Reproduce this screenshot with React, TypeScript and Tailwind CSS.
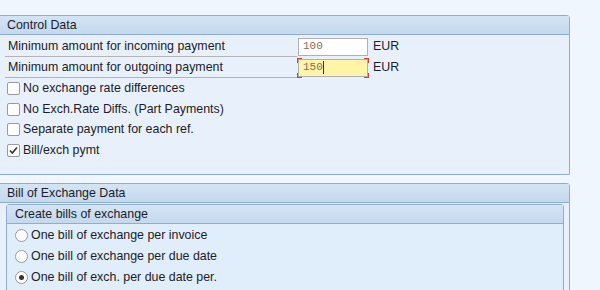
import React from 'react';

const Checkbox = ({ checked, label }: { checked?: boolean; label: string }) => (
  <div className="flex items-center h-[20.7px] pl-[7px]">
    <span className="w-[13px] h-[13px] border border-[#9a9a9a] rounded-[2px] bg-white flex items-center justify-center">
      {checked && (
        <svg width="9" height="9" viewBox="0 0 9 9">
          <path d="M1 4.5 L3.3 7 L8 1.5" stroke="#333" strokeWidth="1.6" fill="none" />
        </svg>
      )}
    </span>
    <span className="ml-[3px]">{label}</span>
  </div>
);

const Radio = ({ checked, label }: { checked?: boolean; label: string }) => (
  <div className="flex items-center h-[21px] pl-[8px]">
    <span className="w-[13px] h-[13px] border border-[#9a9a9a] rounded-full bg-white flex items-center justify-center">
      {checked && <span className="w-[5px] h-[5px] rounded-full bg-[#333]" />}
    </span>
    <span className="ml-[3px]">{label}</span>
  </div>
);

const PanelHeader = ({ title, pad = 'pl-[7px]' }: { title: string; pad?: string }) => (
  <div
    className={`h-[19px] flex items-center border-b border-[#8eadd4] bg-gradient-to-b from-[#d4e4f4] to-[#c4d9ee] ${pad}`}
  >
    {title}
  </div>
);

export default function App() {
  return (
    <div className="w-[600px] h-[290px] overflow-hidden bg-[#f0f6fd] pt-[15px] text-[12.4px] text-[#1c1c2a] font-['Liberation_Sans',Arial,sans-serif]">
      {/* Control Data */}
      <div className="w-[571px] h-[160px] -ml-[1px] border border-[#8eadd4] rounded-tr-[3px] bg-[#e8f1fb]">
        <PanelHeader title="Control Data" />
        <div className="pl-[5px] pt-[1px]">
          <div className="flex items-center h-[21px]">
            <div className="w-[292px] h-full flex items-center pl-[3px] border-b border-[#b4b4b4]">
              Minimum amount for incoming payment
            </div>
            <div className="ml-[1px] w-[70px] h-[18px] border border-[#b0b0b0] bg-white flex items-center pl-[4px] font-['Liberation_Mono',monospace] text-[11px] text-[#8a6a5a]">
              100
            </div>
            <span className="ml-[5px]">EUR</span>
          </div>
          <div className="flex items-center h-[21px]">
            <div className="w-[292px] h-full flex items-center pl-[3px] border-b border-[#b4b4b4]">
              Minimum amount for outgoing payment
            </div>
            <div className="relative ml-[1px] w-[70px] h-[18px] border border-[#b0b0b0] bg-[#fff4a8] flex items-center pl-[4px] font-['Liberation_Mono',monospace] text-[11px] text-[#8a6a5a]">
              150
              <span className="w-[1px] h-[13px] bg-[#333]" />
              <span className="absolute -left-[2px] -top-[2px] w-[5px] h-[5px] border-l border-t border-[#d43a3a]" />
              <span className="absolute -right-[2px] -top-[2px] w-[5px] h-[5px] border-r border-t border-[#d43a3a]" />
              <span className="absolute -left-[2px] -bottom-[2px] w-[5px] h-[5px] border-l border-b border-[#d43a3a]" />
              <span className="absolute -right-[2px] -bottom-[2px] w-[5px] h-[5px] border-r border-b border-[#d43a3a]" />
            </div>
            <span className="ml-[5px]">EUR</span>
          </div>
        </div>
        <div>
          <Checkbox label="No exchange rate differences" />
          <Checkbox label="No Exch.Rate Diffs. (Part Payments)" />
          <Checkbox label="Separate payment for each ref." />
          <Checkbox checked label="Bill/exch pymt" />
        </div>
      </div>

      {/* Bill of Exchange Data */}
      <div className="mt-[8px] w-[571px] h-[120px] -ml-[1px] border border-[#8eadd4] rounded-tr-[3px] bg-[#e8f1fb]">
        <PanelHeader title="Bill of Exchange Data" />
        <div className="mt-[1px] ml-[6px] w-[558px] h-[100px] border border-[#8eadd4] rounded-t-[3px] bg-[#e0edfb]">
          <PanelHeader title="Create bills of exchange" pad="pl-[8px]" />
          <div className="pt-[1px]">
            <Radio label="One bill of exchange per invoice" />
            <Radio label="One bill of exchange per due date" />
            <Radio checked label="One bill of exch. per due date per." />
          </div>
        </div>
      </div>
    </div>
  );
}
